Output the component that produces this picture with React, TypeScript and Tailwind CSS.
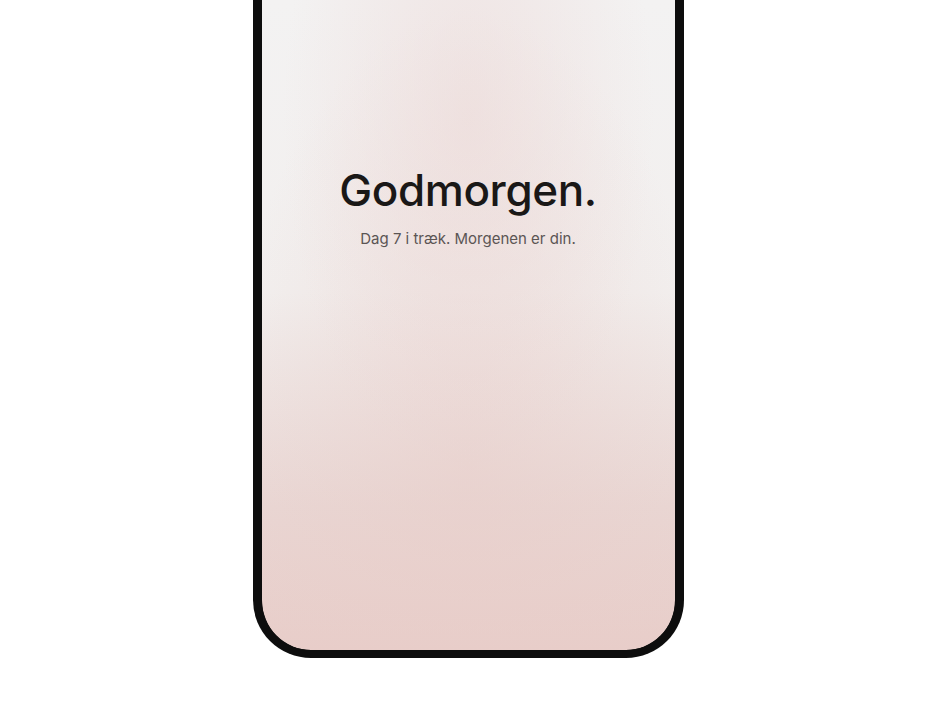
/**
 * Morning greeting screen, shown inside a phone frame whose top runs off the page.
 */
function App() {
  return (
    <div className="min-h-screen bg-white">
      <div className="mx-auto h-[658px] w-[431px] overflow-hidden rounded-b-[58px] border-x-[9px] border-b-[8px] border-[#0d0d0d] bg-[#0d0d0d]">
        <div className="flex h-full flex-col items-center rounded-b-[49px] bg-[radial-gradient(ellipse_45%_55%_at_50%_18%,rgba(236,214,212,0.55),rgba(236,214,212,0)_100%),radial-gradient(ellipse_60%_70%_at_50%_72%,rgba(232,205,201,0.5),rgba(232,205,201,0)_100%),linear-gradient(to_bottom,#f3f2f2_0%,#f2efee_45%,#e9d6d3_78%,#e8cdc9_100%)] pt-[163px] font-['Inter',sans-serif]">
          <h1 className="text-[44px] font-medium leading-[54px] tracking-[-0.4px] text-[#1a1817]">
            Godmorgen.
          </h1>
          <p className="mt-[12px] text-[15px] leading-[20px] tracking-[0px] text-[#5b5554]">
            Dag 7 i træk. Morgenen er din.
          </p>
        </div>
      </div>
    </div>
  )
}

export default App
